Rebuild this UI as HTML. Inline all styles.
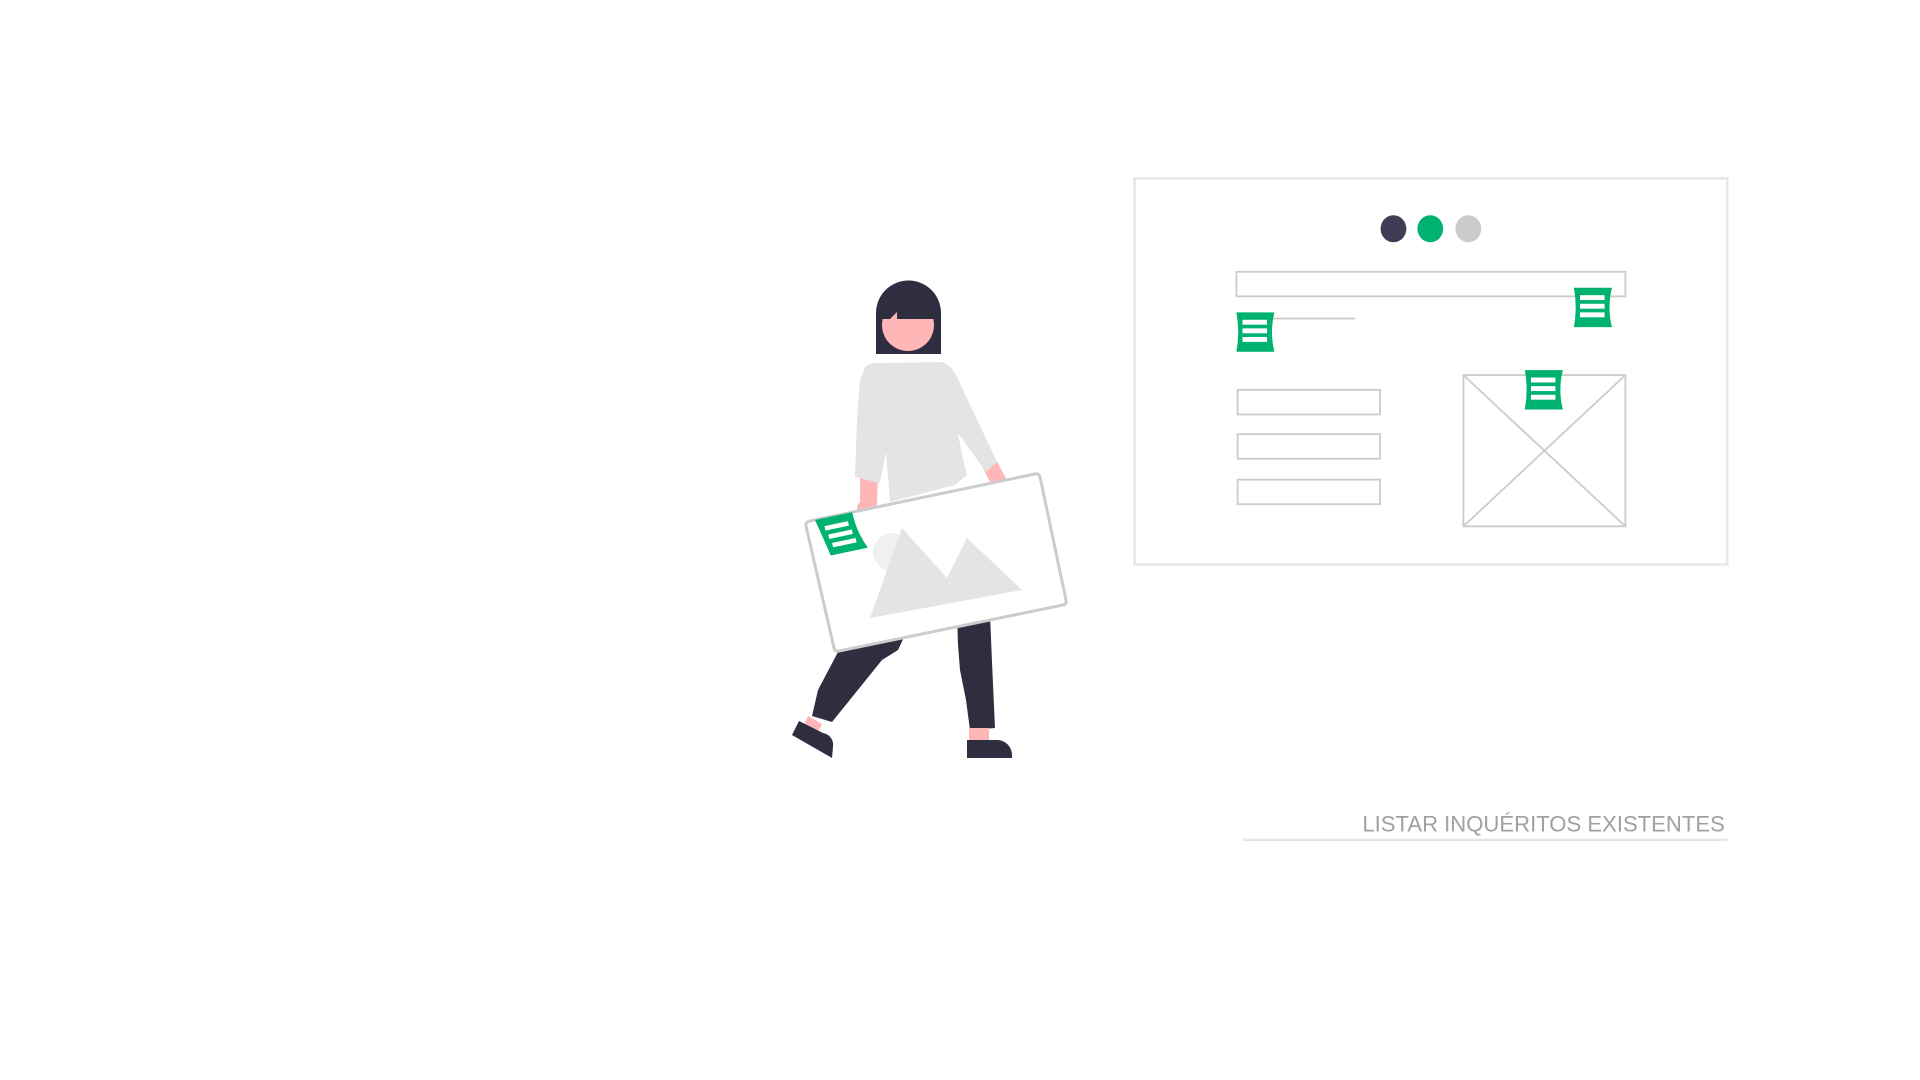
<!DOCTYPE html>
<html><head><meta charset="utf-8"><style>
html,body{margin:0;padding:0;background:#fff;width:1920px;height:1080px;overflow:hidden}
svg{display:block}
</style></head><body>
<svg width="1920" height="1080" viewBox="0 0 1920 1080" xmlns="http://www.w3.org/2000/svg">
<defs>
<g id="tag">
<path d="M0,0 H31 Q27,16 31,32 H0 Q3,16 0,0 Z" fill="#00b26f"/>
<rect x="5" y="6" width="20" height="4" fill="#fff"/>
<rect x="5" y="13" width="20" height="4" fill="#fff"/>
<rect x="5" y="20" width="20" height="4" fill="#fff"/>
</g>
<clipPath id="faceclip"><rect x="850" y="319" width="120" height="60"/></clipPath>
</defs>
<g transform="translate(-3.2,-1.2) scale(1.2273,1.2297)">
<rect x="927" y="146" width="483" height="314" fill="none" stroke="#e6e6e6" stroke-width="2"/>
<ellipse cx="1138" cy="187" rx="10.5" ry="11" fill="#3f3d56"/>
<ellipse cx="1168" cy="187" rx="10.5" ry="11" fill="#00b26f"/>
<ellipse cx="1199" cy="187" rx="10.5" ry="11" fill="#cbcbcb"/>
<rect x="1010" y="222" width="317" height="20" fill="none" stroke="#ccc" stroke-width="1.5"/>
<line x1="1035" y1="260" x2="1107" y2="260" stroke="#ccc" stroke-width="1.5"/>
<rect x="1011" y="318" width="116" height="20" fill="none" stroke="#ccc" stroke-width="1.5"/>
<rect x="1011" y="354" width="116" height="20" fill="none" stroke="#ccc" stroke-width="1.5"/>
<rect x="1011" y="391" width="116" height="20" fill="none" stroke="#ccc" stroke-width="1.5"/>
<rect x="1195" y="306" width="132" height="123" fill="none" stroke="#ccc" stroke-width="1.5"/>
<line x1="1195" y1="306" x2="1327" y2="429" stroke="#ccc" stroke-width="1.5"/>
<line x1="1327" y1="306" x2="1195" y2="429" stroke="#ccc" stroke-width="1.5"/>
<use href="#tag" x="1010" y="255"/>
<use href="#tag" x="1285" y="235"/>
<use href="#tag" x="1245" y="302"/>
<line x1="1015" y1="684" x2="1410" y2="684" stroke="#e6e6e6" stroke-width="2"/>
<text x="1408" y="677" text-anchor="end" font-family="Liberation Sans, sans-serif" font-size="18" fill="#a0a0a0">LISTAR INQUÉRITOS EXISTENTES</text>
</g>
<!-- figure in 1920 coords -->
<path d="M876,354 V313 A32.5,32.5 0 0 1 941,313 V354 Z" fill="#2f2e41"/>
<circle cx="908" cy="325" r="26" fill="#ffb6b6" clip-path="url(#faceclip)"/>
<path d="M890,319 L897,312 L897,319 Z" fill="#ffb6b6"/>
<path d="M860,475 L878,478 L877,505 L860,505 Z" fill="#ffb6b6"/>
<circle cx="867" cy="509" r="10" fill="#ffb6b6"/>
<path d="M982,466 L995,458 L1008,482 L995,492 Z" fill="#ffb6b6"/>
<circle cx="1002" cy="489" r="11" fill="#ffb6b6"/>
<path d="M957,615 L990,615 L992,662 L995,728 L970,730 L966,700 L960,670 L958,645 Z" fill="#2f2e41"/>
<path d="M838,652 L905,635 L898,650 L882,660 L832,722 L812,716 L818,690 Z" fill="#2f2e41"/>
<rect x="969" y="728" width="20" height="14" fill="#ffb6b6"/>
<path d="M808,716 L822,724 L818,732 L804,726 Z" fill="#ffb6b6"/>
<path d="M967,740 H997 A15,15 0 0 1 1012,755 V758 H967 Z" fill="#2f2e41"/>
<path d="M799,721 L823,733 A12,12 0 0 1 833,747 L832,758 L792,735 Z" fill="#2f2e41"/>
<path d="M865,367 Q870,363 878,363 L943,362 Q951,366 957,377 L997,462 L986,472 L958,433 L962,455 L967,475 L955,485 L890,502 L886,452 L880,483 L855,477 L857,420 L860,380 Z" fill="#e4e4e4"/>
<path d="M810,521 L1035,474 Q1039,473 1040,477 L1066,600 Q1067,604 1063,605 L839,651 Q835,652 834,648 L806,526 Q805,522 810,521 Z" fill="#fff" stroke="#ccc" stroke-width="3"/>
<circle cx="892" cy="552" r="19" fill="#f0f0f0"/>
<path d="M870,618 L902,528 L947,578 L967,538 L1022,590 Z" fill="#e4e4e4"/>
<g transform="translate(815,520) rotate(-12)">
<path d="M0,0 H38 Q38,20 46,38 H8 Q4,18 0,0 Z" fill="#00b26f"/>
<rect x="8" y="8" width="24" height="4.5" fill="#fff"/>
<rect x="10" y="17" width="24" height="4.5" fill="#fff"/>
<rect x="12" y="26" width="24" height="4.5" fill="#fff"/>
</g>
</svg>
</body></html>
